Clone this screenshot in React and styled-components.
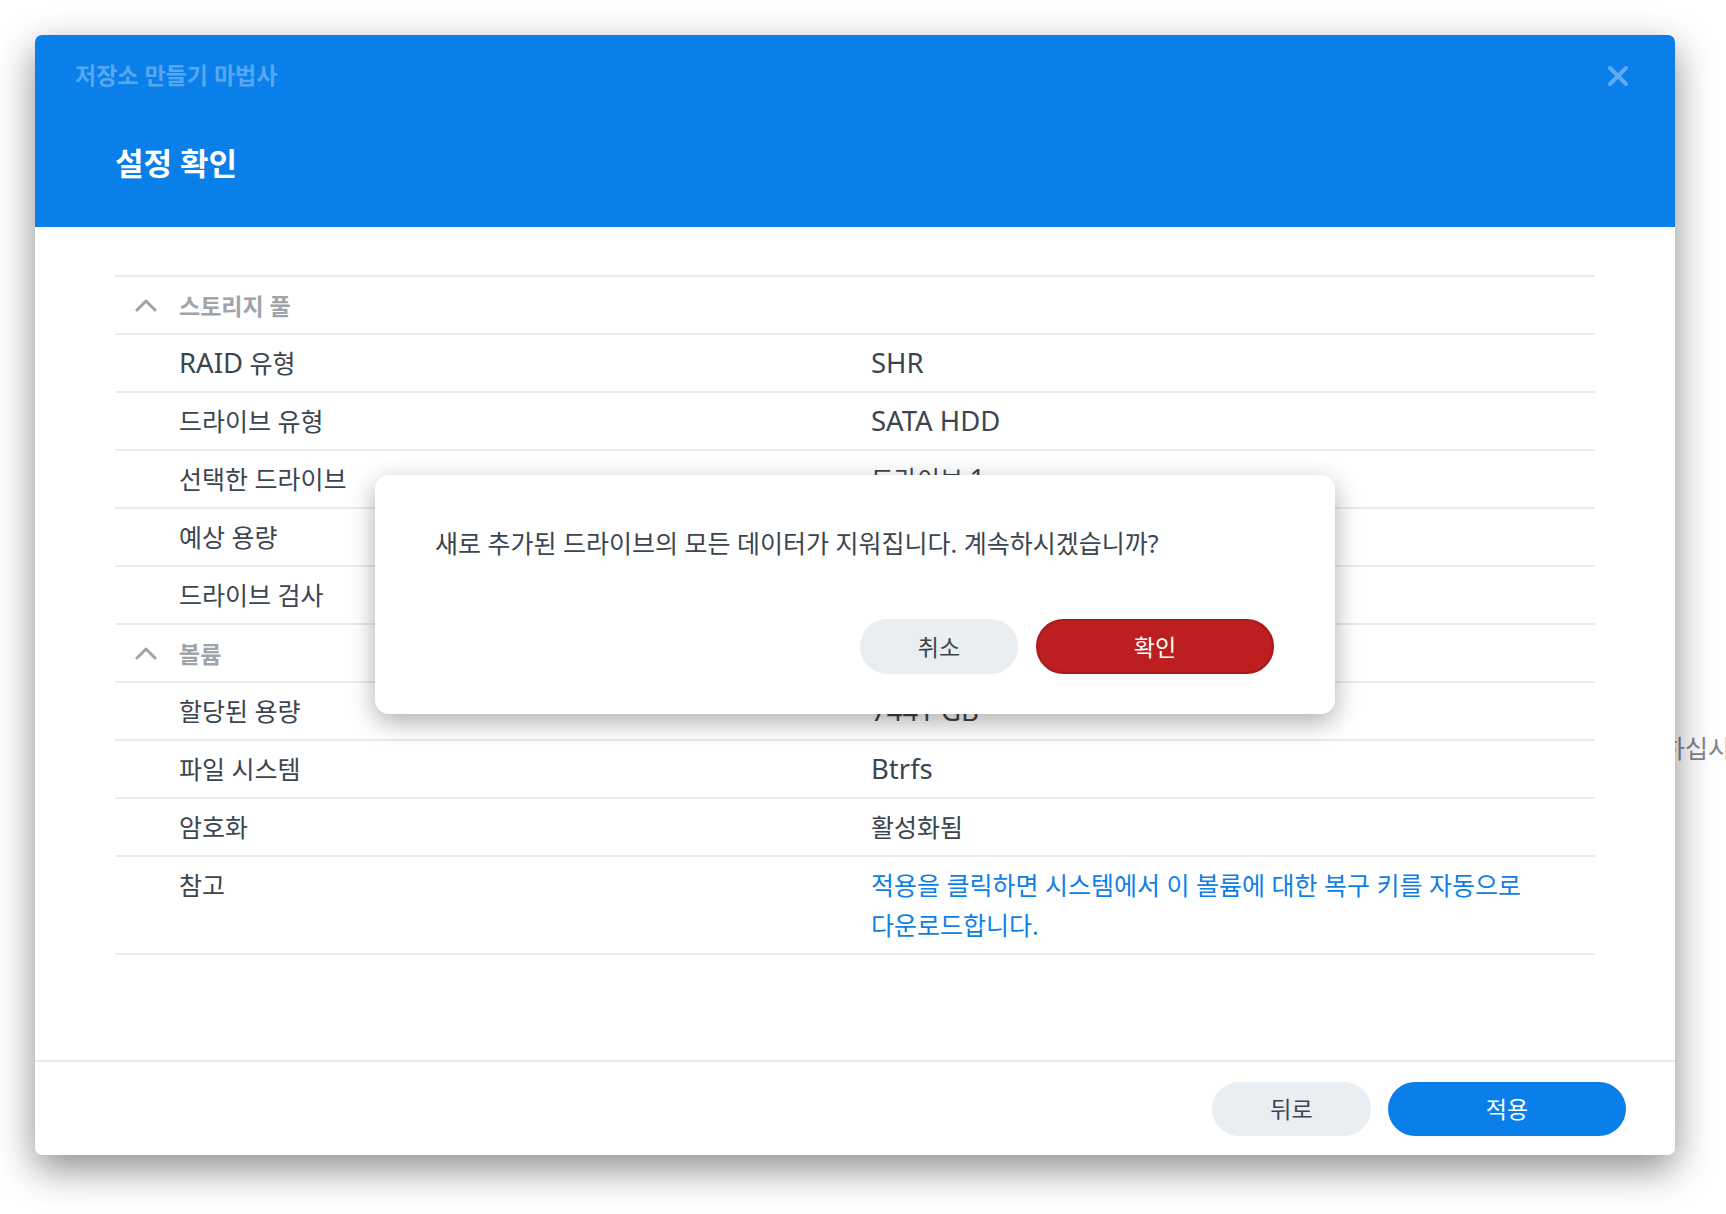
import React from "react";
import styled, { createGlobalStyle } from "styled-components";

const GlobalStyle = createGlobalStyle`
  * {
    box-sizing: border-box;
  }

  html,
  body {
    margin: 0;
    padding: 0;
    background: #ffffff;
    overflow: hidden;
  }

  body {
    font-family: "Noto Sans", "Noto Sans CJK KR", sans-serif;
    color: #3b4550;
    word-break: keep-all;
  }
`;

const Desktop = styled.div`
  position: relative;
  width: 1726px;
  height: 1214px;
  padding: 35px 0 0 35px;
`;

// a window further back, only a few letters of it peek past the wizard
const BackText = styled.div`
  position: absolute;
  left: 1662px;
  top: 730px;
  font-size: 25px;
  line-height: 36px;
  color: #7f868d;
  white-space: nowrap;
`;

const Window = styled.div`
  position: relative;
  z-index: 1;
  width: 1640px;
  height: 1120px;
  display: flex;
  flex-direction: column;
  background: #ffffff;
  border-radius: 7px;
  box-shadow: 0 14px 38px rgba(0, 0, 0, 0.45);
`;

const Header = styled.div`
  height: 192px;
  flex-shrink: 0;
  padding: 25px 45px 0 40px;
  background: #0a7fea;
  border-radius: 7px 7px 0 0;
`;

const TopBar = styled.div`
  display: flex;
  align-items: center;
  justify-content: space-between;
  height: 30px;
`;

const WizardName = styled.div`
  font-size: 23px;
  font-weight: 700;
  line-height: 30px;
  color: rgba(255, 255, 255, 0.33);
`;

const CloseButton = styled.button`
  display: flex;
  align-items: center;
  justify-content: center;
  width: 24px;
  height: 24px;
  padding: 0;
  margin-top: 2px;
  border: none;
  background: none;
  cursor: pointer;
`;

const StepTitle = styled.h2`
  margin: 52px 0 0 40px;
  font-size: 31px;
  font-weight: 700;
  line-height: 42px;
  color: #ffffff;
`;

const Body = styled.div`
  position: relative;
  flex: 1;
  padding: 48px 80px 0 80px;
`;

const Table = styled.div`
  border-bottom: 2px solid #e7ecf1;
`;

const SectionRow = styled.div`
  display: flex;
  align-items: center;
  gap: 22px;
  height: 58px;
  padding-left: 20px;
  border-top: 2px solid #e7ecf1;
  font-size: 23px;
  font-weight: 700;
  color: #9ea4ab;
`;

const Row = styled.div`
  display: grid;
  grid-template-columns: 756px 1fr;
  align-items: ${(p) => (p.$multiline ? "start" : "center")};
  min-height: 58px;
  padding: ${(p) => (p.$multiline ? "8px 0 8px" : "0")};
  border-top: 2px solid #e7ecf1;
  font-size: 25px;
  line-height: ${(p) => (p.$multiline ? "40px" : "36px")};
`;

const Label = styled.div`
  padding-left: 64px;
  color: #3b4550;
`;

const Value = styled.div`
  padding-right: 20px;
  color: ${(p) => (p.$note ? "#0f7fe6" : "#3b4550")};
`;

// latin runs are set a little larger so they sit next to hangul evenly
const Latin = styled.span`
  font-size: 1.1em;
  line-height: 1;
`;

const Footer = styled.div`
  display: flex;
  align-items: center;
  justify-content: flex-end;
  gap: 17px;
  height: 95px;
  flex-shrink: 0;
  padding-right: 49px;
  border-top: 2px solid #e4e9f0;
`;

const Button = styled.button`
  height: ${(p) => p.$height || 54}px;
  width: ${(p) => p.$width}px;
  padding: 0;
  border-radius: 28px;
  border: ${(p) => (p.$variant === "danger" ? "2px solid #a8191b" : "none")};
  background: ${(p) =>
    p.$variant === "primary"
      ? "#0a7fea"
      : p.$variant === "danger"
      ? "#bd1e1f"
      : "#e9eef3"};
  color: ${(p) => (p.$variant ? "#ffffff" : "#3b4550")};
  font-family: inherit;
  font-size: 23px;
  line-height: 30px;
  cursor: pointer;
`;

const Dialog = styled.div`
  position: absolute;
  left: 340px;
  top: 248px;
  width: 960px;
  height: 239px;
  display: flex;
  flex-direction: column;
  padding: 50px 61px 40px 60px;
  background: #ffffff;
  border-radius: 14px;
  box-shadow: 0 8px 26px rgba(0, 0, 0, 0.32);
`;

const DialogText = styled.p`
  margin: 0;
  font-size: 25px;
  line-height: 36px;
  color: #3b4550;
`;

const DialogActions = styled.div`
  display: flex;
  justify-content: flex-end;
  gap: 18px;
  margin-top: 58px;
`;

const Chevron = () => (
  <svg width="22" height="14" viewBox="0 0 22 14">
    <polyline
      points="2,12 11,3 20,12"
      fill="none"
      stroke="#9ea4ab"
      strokeWidth="3"
      strokeLinecap="round"
      strokeLinejoin="round"
    />
  </svg>
);

const CloseIcon = () => (
  <svg width="22" height="22" viewBox="0 0 22 22">
    <path
      d="M3 3 L19 19 M19 3 L3 19"
      stroke="rgba(255,255,255,0.35)"
      strokeWidth="4"
      strokeLinecap="round"
    />
  </svg>
);

const sections = [
  {
    title: "스토리지 풀",
    rows: [
      [<><Latin>RAID</Latin> 유형</>, <Latin>SHR</Latin>],
      ["드라이브 유형", <Latin>SATA HDD</Latin>],
      ["선택한 드라이브", <>드라이브 <Latin>1</Latin></>],
      ["예상 용량", <Latin>7441 GB</Latin>],
      ["드라이브 검사", "건너뛰기"],
    ],
  },
  {
    title: "볼륨",
    rows: [
      ["할당된 용량", <Latin>7441 GB</Latin>],
      ["파일 시스템", <Latin>Btrfs</Latin>],
      ["암호화", "활성화됨"],
    ],
  },
];

export default function App() {
  return (
    <>
      <GlobalStyle />
      <Desktop>
        <BackText>하십시오.</BackText>
        <Window>
          <Header>
            <TopBar>
              <WizardName>저장소 만들기 마법사</WizardName>
              <CloseButton>
                <CloseIcon />
              </CloseButton>
            </TopBar>
            <StepTitle>설정 확인</StepTitle>
          </Header>

          <Body>
            <Table>
              {sections.map((section) => (
                <React.Fragment key={section.title}>
                  <SectionRow>
                    <Chevron />
                    {section.title}
                  </SectionRow>
                  {section.rows.map(([label, value], i) => (
                    <Row key={i}>
                      <Label>{label}</Label>
                      <Value>{value}</Value>
                    </Row>
                  ))}
                </React.Fragment>
              ))}
              <Row $multiline>
                <Label>참고</Label>
                <Value $note>
                  적용을 클릭하면 시스템에서 이 볼륨에 대한 복구 키를 자동으로
                  다운로드합니다.
                </Value>
              </Row>
            </Table>

            <Dialog>
              <DialogText>
                새로 추가된 드라이브의 모든 데이터가 지워집니다. 계속하시겠습니까?
              </DialogText>
              <DialogActions>
                <Button $width={158} $height={55}>
                  취소
                </Button>
                <Button $width={238} $height={55} $variant="danger">
                  확인
                </Button>
              </DialogActions>
            </Dialog>
          </Body>

          <Footer>
            <Button $width={159}>뒤로</Button>
            <Button $width={238} $variant="primary">
              적용
            </Button>
          </Footer>
        </Window>
      </Desktop>
    </>
  );
}
